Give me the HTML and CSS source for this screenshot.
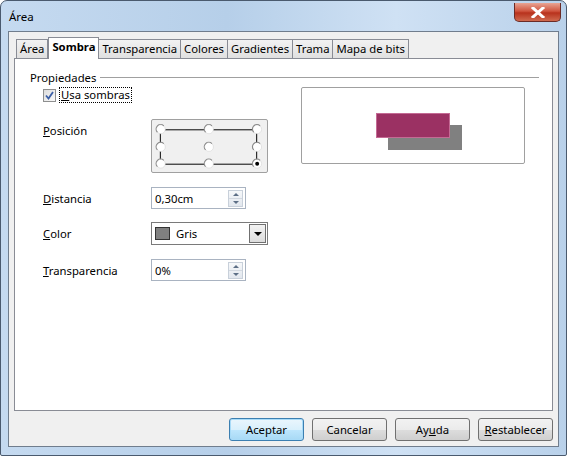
FILE: index.html
```html
<!DOCTYPE html>
<html lang="es">
  <head>
    <meta charset="UTF-8" />
    <title>Área</title>
    <link rel="stylesheet" href="styles.css">
  </head>
  <body>
    <div class="window">
      <div class="titlebar">
        <span class="title">Área</span>
        <div class="close">
          <svg width="14" height="11" viewBox="0 0 14 11">
            <path d="M2 1 L12 10 M12 1 L2 10" stroke="#fff" stroke-width="3" stroke-linecap="square"/>
          </svg>
        </div>
      </div>
      <div class="client">
        <div class="tabs">
          <div class="tab">Área</div>
          <div class="tab active">Sombra</div>
          <div class="tab">Transparencia</div>
          <div class="tab">Colores</div>
          <div class="tab">Gradientes</div>
          <div class="tab">Trama</div>
          <div class="tab">Mapa de bits</div>
        </div>
        <div class="page">
          <div class="group-title">
            <span>Propiedades</span>
            <div class="rule"></div>
          </div>
          <div class="content">
            <div class="fields">
              <div class="check-row">
                <span class="checkbox">
                  <svg width="9" height="9" viewBox="0 0 9 9">
                    <path d="M1 4.5 L3.5 7.5 L8 1" fill="none" stroke="#3a5ea6" stroke-width="1.8"/>
                  </svg>
                </span>
                <span class="focus"><u>U</u>sa sombras</span>
              </div>
              <div class="row pos-row">
                <label><u>P</u>osición</label>
                <div class="pos-box">
                  <svg width="117" height="54" viewBox="0 0 117 54">
                    <g stroke="#000" stroke-width="1">
                      <line x1="9" y1="9.5" x2="107" y2="9.5"/>
                      <line x1="9" y1="44.5" x2="107" y2="44.5"/>
                      <line x1="8.5" y1="9" x2="8.5" y2="44"/>
                      <line x1="106.5" y1="9" x2="106.5" y2="44"/>
                    </g>
                    <g class="radio">
                      <circle cx="9" cy="9" r="4.5"/>
                      <circle cx="58" cy="9" r="4.5"/>
                      <circle cx="107" cy="9" r="4.5"/>
                      <circle cx="9" cy="27" r="4.5"/>
                      <circle cx="58" cy="27" r="4.5"/>
                      <circle cx="107" cy="27" r="4.5"/>
                      <circle cx="9" cy="44" r="4.5"/>
                      <circle cx="58" cy="44" r="4.5"/>
                      <circle cx="107" cy="44" r="4.5"/>
                    </g>
                    <g class="radio-edge">
                      <path d="M12 5.5 A4.5 4.5 0 0 0 5.5 12"/>
                      <path d="M61 5.5 A4.5 4.5 0 0 0 54.5 12"/>
                      <path d="M110 5.5 A4.5 4.5 0 0 0 103.5 12"/>
                      <path d="M12 23.5 A4.5 4.5 0 0 0 5.5 30"/>
                      <path d="M61 23.5 A4.5 4.5 0 0 0 54.5 30"/>
                      <path d="M110 23.5 A4.5 4.5 0 0 0 103.5 30"/>
                      <path d="M12 40.5 A4.5 4.5 0 0 0 5.5 47"/>
                      <path d="M61 40.5 A4.5 4.5 0 0 0 54.5 47"/>
                      <path d="M110 40.5 A4.5 4.5 0 0 0 103.5 47"/>
                    </g>
                    <circle cx="107" cy="44" r="2" fill="#000"/>
                  </svg>
                </div>
              </div>
              <div class="row dist-row">
                <label><u>D</u>istancia</label>
                <div class="spin">
                  <span class="value">0,30cm</span>
                  <span class="spin-btns"><i class="up"></i><i class="down"></i></span>
                </div>
              </div>
              <div class="row color-row">
                <label><u>C</u>olor</label>
                <div class="combo">
                  <span class="swatch"></span>
                  <span class="value">Gris</span>
                  <span class="drop"><i></i></span>
                </div>
              </div>
              <div class="row trans-row">
                <label><u>T</u>ransparencia</label>
                <div class="spin">
                  <span class="value">0%</span>
                  <span class="spin-btns"><i class="up"></i><i class="down"></i></span>
                </div>
              </div>
            </div>
            <div class="preview">
              <div class="shadow"></div>
              <div class="shape"></div>
            </div>
          </div>
        </div>
        <div class="buttons">
          <button class="default">Aceptar</button>
          <button>Cancelar</button>
          <button>Ay<u>u</u>da</button>
          <button><u>R</u>establecer</button>
        </div>
      </div>
    </div>
  </body>
</html>
```

FILE: styles.css
```css
* {
  margin: 0;
  padding: 0;
  box-sizing: border-box;
}

html,
body {
  background: #fff;
  font-family: "Noto Sans", "Open Sans", sans-serif;
  font-size: 11.3px;
  color: #000;
}

.window {
  width: 567px;
  height: 456px;
  border: 1px solid #4a5a6e;
  border-radius: 7px 7px 2px 2px;
  background: linear-gradient(to right, #c5daf0, #b6cfe9 40%, #cfe1f4 70%, #b9d1ea);
  display: flex;
  flex-direction: column;
}

.titlebar {
  height: 30px;
  display: flex;
  justify-content: space-between;
  padding: 0 5px 0 8px;
}

.title {
  line-height: 32px;
  font-size: 11.5px;
}

.close {
  width: 47px;
  height: 19px;
  margin-top: 2px;
  border: 1px solid #6b2b26;
  border-top: none;
  border-radius: 0 0 5px 5px;
  background: linear-gradient(to bottom, #e8a493, #d0553f 45%, #b8321d 55%, #cf6a4f);
  display: flex;
  align-items: center;
  justify-content: center;
}

.client {
  flex: 1;
  margin: 0 7px 8px 7px;
  border: 1px solid #707d8d;
  background: #f0f0f0;
  padding: 5px 5px 5px 5px;
  display: flex;
  flex-direction: column;
}

.tabs {
  display: flex;
  height: 21px;
  align-items: flex-end;
  padding-left: 2px;
}

.tab {
  height: 19px;
  padding: 0 3px;
  border: 1px solid #898c95;
  border-bottom: none;
  border-left: none;
  background: linear-gradient(to bottom, #f2f2f2, #e0e0e0);
  line-height: 18px;
}

.tab:first-child {
  border-left: 1px solid #898c95;
}

.tab.active {
  height: 22px;
  background: #fff;
  font-weight: bold;
  border-left: 1px solid #898c95;
  margin-bottom: -1px;
  position: relative;
  z-index: 1;
  padding: 0 3px;
}

.page {
  height: 353px;
  background: #fff;
  border: 1px solid #898c95;
  padding: 11px 13px 0 15px;
}

.group-title {
  display: flex;
  align-items: center;
  gap: 4px;
  height: 14px;
}

.rule {
  flex: 1;
  height: 1px;
  background: #a0a0a0;
}

.content {
  display: flex;
  padding-left: 13px;
  margin-top: 3px;
}

.fields {
  width: 258px;
}

.check-row {
  display: flex;
  align-items: center;
  height: 16px;
}

.checkbox {
  width: 13px;
  height: 13px;
  border: 1px solid #8e8f8f;
  background: linear-gradient(to bottom right, #dcdcdc, #fafafa);
  display: flex;
  align-items: center;
  justify-content: center;
  margin-right: 3px;
}

.focus {
  border: 1px dotted #000;
  padding: 0 1px;
  line-height: 14px;
}

.row {
  display: flex;
}

.row label {
  width: 108px;
}

.pos-row {
  margin-top: 16px;
}

.pos-row label {
  padding-top: 4px;
}

.pos-box {
  width: 117px;
  height: 54px;
  border: 1px solid #a0a0a0;
  background: #f0f0f0;
  border-radius: 2px;
  display: flex;
}

.radio circle {
  fill: #fff;
  stroke: #d4d4d4;
  stroke-width: 0.6;
}

.radio-edge path {
  fill: none;
  stroke: #8a8a8a;
  stroke-width: 1.1;
}

.dist-row,
.color-row,
.trans-row {
  align-items: center;
}

.dist-row {
  margin-top: 14px;
}

.color-row {
  margin-top: 13px;
}

.trans-row {
  margin-top: 14px;
}

.spin {
  width: 95px;
  height: 22px;
  border: 1px solid #a9b3c1;
  background: #fff;
  display: flex;
  align-items: center;
  justify-content: space-between;
  padding: 0 2px 0 3px;
}

.spin-btns {
  width: 15px;
  height: 17px;
  display: flex;
  flex-direction: column;
  border: 1px solid #c8d0da;
  background: linear-gradient(to bottom, #f6f8fa, #e2e7ee);
}

.spin-btns i {
  flex: 1;
  display: flex;
  align-items: center;
  justify-content: center;
}

.spin-btns i::after {
  content: "";
  border-left: 3px solid transparent;
  border-right: 3px solid transparent;
}

.spin-btns .up::after {
  border-bottom: 3px solid #5d6f86;
}

.spin-btns .down {
  border-top: 1px solid #d2d8e0;
}

.spin-btns .down::after {
  border-top: 3px solid #5d6f86;
}

.combo {
  width: 117px;
  height: 23px;
  border: 1px solid #7a7a7a;
  background: #fff;
  display: flex;
  align-items: center;
  padding: 0 1px 0 3px;
}

.swatch {
  width: 15px;
  height: 13px;
  background: #808080;
  border: 1px solid #333;
  margin-right: 6px;
}

.combo .value {
  flex: 1;
}

.drop {
  width: 17px;
  height: 19px;
  border: 1px solid #707070;
  background: linear-gradient(to bottom, #f2f2f2, #dcdcdc);
  display: flex;
  align-items: center;
  justify-content: center;
}

.drop i {
  border-left: 4px solid transparent;
  border-right: 4px solid transparent;
  border-top: 4px solid #000;
}

.preview {
  width: 224px;
  height: 77px;
  border: 1px solid #a0a0a0;
  border-radius: 2px;
  position: relative;
}

.shape,
.shadow {
  position: absolute;
  width: 74px;
  height: 25px;
}

.shape {
  left: 74px;
  top: 25px;
  background: #9b3163;
  border: 1px solid #c46a94;
}

.shadow {
  left: 86px;
  top: 37px;
  background: #808080;
}

.buttons {
  display: flex;
  justify-content: flex-end;
  gap: 8px;
  margin-top: 7px;
}

.buttons button {
  width: 75px;
  height: 23px;
  font-family: "Noto Sans", "Open Sans", sans-serif;
  font-size: 11.3px;
  border: 1px solid #707070;
  border-radius: 3px;
  background: linear-gradient(to bottom, #f2f2f2 0%, #ebebeb 50%, #dddddd 51%, #cfcfcf 100%);
  color: #000;
}

.buttons button.default {
  border-color: #3c7fb1;
  box-shadow: inset 0 0 0 1px #a8dbf8;
  background: linear-gradient(to bottom, #eaf6fd 0%, #d9f0fc 50%, #bee6fd 51%, #a7d9f5 100%);
}
```
